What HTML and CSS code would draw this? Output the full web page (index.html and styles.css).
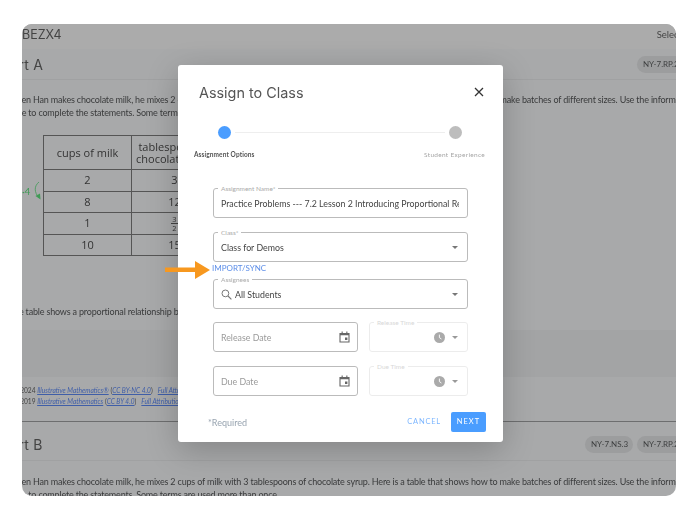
FILE: index.html
```html
<!DOCTYPE html>
<html lang="en">
<head>
<meta charset="utf-8">
<title>Assign to Class</title>
<link rel="stylesheet" href="styles.css">
</head>
<body>
<div class="frame">
  <div class="page">
    <div class="topbar"><span>BEZX4</span><span class="select">Select</span></div>
    <div class="part-head">
      <h2 class="part-title">Part A</h2>
      <div class="chips"><span class="chip">NY-7.RP.2</span></div>
    </div>
    <p class="prompt">When Han makes chocolate milk, he mixes 2 cups of milk with 3 tablespoons of chocolate syrup. Here is a table that shows how to make batches of different sizes. Use the information in the<br>table to complete the statements. Some terms are used more than once.</p>
    <div class="table-wrap">
      <div class="times"><span>·4</span>
        <svg class="times-arrow" width="8" height="19" viewBox="0 0 8 19"><path d="M6 1C1 5 1 11 6 17" fill="none" stroke="#3f9a55" stroke-width=".8"/><path d="M2.500 15l5 3.500-.5-6z" fill="#3f9a55"/></svg>
      </div>
      <table class="recipe">
        <tr class="head"><td class="c1">cups of milk</td><td class="c2">tablespoons of<br>chocolate syrup</td></tr>
        <tr><td>2</td><td>3</td></tr>
        <tr><td>8</td><td>12</td></tr>
        <tr><td>1</td><td><span class="frac"><span class="num">3</span><span>2</span></span></td></tr>
        <tr><td>10</td><td>15</td></tr>
      </table>
    </div>
    <p class="prompt second">The table shows a proportional relationship between the cups of milk and the tablespoons of syrup.</p>
    <div class="band"></div>
    <div class="attrib">
      <p>© 2024 <a>Illustrative Mathematics®</a> (<a>CC BY-NC 4.0</a>) &nbsp; <a>Full Attribution</a></p>
      <p>© 2019 <a>Illustrative Mathematics</a> (<a>CC BY 4.0</a>) &nbsp; <a>Full Attribution</a></p>
    </div>
    <div class="part-head part-b">
      <h2 class="part-title">Part B</h2>
      <div class="chips"><span class="chip">NY-7.NS.3</span><span class="chip">NY-7.RP.2</span></div>
    </div>
    <p class="prompt">When Han makes chocolate milk, he mixes 2 cups of milk with 3 tablespoons of chocolate syrup. Here is a table that shows how to make batches of different sizes. Use the information in the<br>table to complete the statements. Some terms are used more than once.</p>
  </div>

  <div class="modal">
    <div class="modal-head">
      <h1>Assign to Class</h1>
      <svg class="close" width="10" height="10" viewBox="0 0 10 10"><path d="M1 1l8 8M9 1L1 9" stroke="#333" stroke-width="1.3" fill="none"/></svg>
    </div>
    <div class="stepper">
      <div class="step-track"><span class="dot active"></span><span class="track"></span><span class="dot"></span></div>
      <div class="step-labels"><span class="on">Assignment Options</span><span>Student Experience</span></div>
    </div>
    <div class="form">
      <div class="field"><span class="legend">Assignment Name*</span><span class="value clip">Practice Problems --- 7.2 Lesson 2 Introducing Proportional Relationships</span></div>
      <div class="field mt14"><span class="legend">Class*</span><span class="value">Class for Demos</span><span class="caret"></span></div>
      <a class="import">IMPORT/SYNC</a>
      <div class="field mt6"><span class="legend">Assignees</span>
        <svg class="search" width="11" height="11" viewBox="0 0 11 11"><circle cx="4.4" cy="4.4" r="3.4" fill="none" stroke="#777" stroke-width="1"/><path d="M7 7l3.4 3.4" stroke="#777" stroke-width="1.1"/></svg>
        <span class="value">All Students</span><span class="caret"></span></div>
      <div class="date-row mt13">
        <div class="field date"><span class="value muted">Release Date</span>
          <svg class="cal" width="11" height="12" viewBox="0 0 11 12"><path d="M1 2.5h9v8.5H1z" fill="none" stroke="#666" stroke-width="1.1"/><path d="M1 2h9v2.2H1zM2.6.5h1.1v2H2.6zM7.3.5h1.1v2H7.3zM6 6.6h2.4V9H6z" fill="#666"/></svg>
        </div>
        <div class="field time"><span class="legend light">Release Time</span>
          <svg class="clock" width="11" height="11" viewBox="0 0 11 11"><circle cx="5.5" cy="5.5" r="5.5" fill="#aaa"/><path d="M5.4 2.6v3l2 1.4" stroke="#fff" stroke-width=".9" fill="none"/></svg>
          <span class="caret"></span></div>
      </div>
      <div class="date-row mt14">
        <div class="field date"><span class="value muted">Due Date</span>
          <svg class="cal" width="11" height="12" viewBox="0 0 11 12"><path d="M1 2.5h9v8.5H1z" fill="none" stroke="#666" stroke-width="1.1"/><path d="M1 2h9v2.2H1zM2.6.5h1.1v2H2.6zM7.3.5h1.1v2H7.3zM6 6.6h2.4V9H6z" fill="#666"/></svg>
        </div>
        <div class="field time"><span class="legend light">Due Time</span>
          <svg class="clock" width="11" height="11" viewBox="0 0 11 11"><circle cx="5.5" cy="5.5" r="5.5" fill="#aaa"/><path d="M5.4 2.6v3l2 1.4" stroke="#fff" stroke-width=".9" fill="none"/></svg>
          <span class="caret"></span></div>
      </div>
    </div>
    <div class="modal-foot">
      <span class="required">*Required</span>
      <span class="cancel">CANCEL</span>
      <span class="next">NEXT</span>
    </div>
  </div>

  <svg class="pointer" width="45" height="18" viewBox="0 0 45 18"><path d="M0 6.500h30V0l15 9-15 9v-7H0z" fill="#f7981f"/></svg>
</div>
</body>
</html>
```
FILE: styles.css
```css
* { box-sizing: border-box; }
html, body { margin: 0; background: #fff; }
body { width: 698px; height: 508px; padding: 24px 22px 12px; overflow: hidden; font-family: Lato, "Liberation Sans", sans-serif; }
p, h1, h2 { margin: 0; font-weight: 400; }

.frame { position: relative; width: 654px; height: 472px; overflow: hidden; border-radius: 10px; background: #a8a9aa; filter: blur(.4px); }
.page { display: flex; flex-direction: column; color: #3a3b3c; }

.topbar { height: 25px; background: #ababab; display: flex; justify-content: space-between; align-items: center; padding-bottom: 4px; font-size: 12.500px; font-family: Inter, sans-serif; margin-right: -6px; color: #444; }
.topbar .select { font-size: 9.500px; font-family: Lato, sans-serif; }

.part-head { height: 31px; display: flex; justify-content: space-between; align-items: center; border-bottom: 1px solid #a0a1a2; margin: 0 -14px 0 -21px; }
.part-title { font-size: 14px; font-family: Inter, sans-serif; color: #444; letter-spacing: .3px; }
.chips { display: flex; gap: 4px; }
.chip { height: 17px; width: 48px; border-radius: 9px; background: #9c9d9e; font-size: 8px; line-height: 17px; padding-left: 6px; color: #3f4041; white-space: nowrap; }
.part-head .chips .chip:last-child { width: 53px; }

.prompt { margin: 13px 0 0 -14.500px; font-size: 9px; letter-spacing: -.18px; line-height: 13px; white-space: nowrap; color: #3a3b3c; flex: none; }
.prompt.second { margin: 49px 0 0 -13px; }

.table-wrap { position: relative; margin: 16px 0 0 21px; }
.times { position: absolute; left: -21px; top: 46px; display: flex; align-items: center; font-size: 10px; color: #3f9a55; gap: 3px; }
.recipe { border-collapse: collapse; font-family: "Open Sans", sans-serif; font-size: 11px; color: #333; text-align: center; table-layout: fixed; width: 174px; }
.recipe td { border: 1px solid #555; height: 21.500px; padding: 0; line-height: 12px; }
.recipe .head td { height: 34px; }
.recipe .c1 { width: 88px; }
.recipe .c2 { width: 86px; padding-left: 4px; white-space: nowrap; }
.frac { display: inline-flex; flex-direction: column; align-items: center; font-size: 7.500px; line-height: 8px; vertical-align: middle; }
.num { border-bottom: 1px solid #444; padding: 0 1px; }

.band { height: 47px; margin-top: 12px; background: #a3a4a5; }
.attrib { margin: 8px 0 0 -9px; font-size: 6.600px; line-height: 11px; color: #444; white-space: nowrap; height: 36px; }
.attrib a { color: #3f5ea8; font-style: italic; text-decoration: underline; }

.part-b { height: 40px; padding-top: 6px; border-top: 1px solid #6d6e6f; }
.part-b + .prompt { margin-top: 13.500px; }

.modal { position: absolute; left: 156px; top: 41px; width: 325px; height: 377px; background: #fff; border-radius: 3px; box-shadow: 0 8px 32px rgba(0,0,0,.22); display: flex; flex-direction: column; color: #444; }
.modal-head { display: flex; justify-content: space-between; align-items: center; height: 56px; padding: 0 19px 2px 21px; }
.modal-head h1 { font-family: Inter, sans-serif; font-size: 14.400px; color: #555; }

.stepper { padding: 5px 18px 0 16px; }
.step-track { display: flex; align-items: center; padding: 0 23px 0 24px; gap: 4px; }
.dot { width: 13px; height: 13px; border-radius: 50%; background: #bdbdbd; flex: none; }
.dot.active { background: #4a9dff; }
.track { height: 1px; flex: 1; background: #eee; }
.step-labels { display: flex; justify-content: space-between; margin-top: 12px; font-size: 6.500px; line-height: 8px; letter-spacing: .3px; color: #a6a6a6; }
.step-labels .on { color: #555; font-weight: 700; letter-spacing: .1px; }

.form { padding: 29.400px 35px 0; display: flex; flex-direction: column; }
.field { position: relative; height: 30px; border: 1px solid #bbb; border-radius: 3px; display: flex; align-items: center; padding: 0 8px 0 7px; font-size: 8.800px; color: #444; }
.legend { position: absolute; left: 4px; top: -4px; padding: 0 3px; background: #fff; font-size: 6.500px; line-height: 7px; color: #aaa; white-space: nowrap; }
.legend.light { color: #d8d8d8; }
.value { white-space: nowrap; }
.clip { overflow: hidden; width: 100%; }
.muted { color: #9a9a9a; }
.caret { width: 0; height: 0; margin-left: auto; border: 3px solid transparent; border-top: 3.500px solid #777; border-bottom: 0; margin-right: 1px; }
.mt14 { margin-top: 14px; }
.mt13 { margin-top: 13px; }
.mt6 { margin-top: 6px; }
.import { margin: 1px 0 0 -1px; font-size: 8px; line-height: 10px; color: #5b8de8; }
.search { margin-right: 3px; flex: none; }
.date-row { display: flex; gap: 11px; }
.date { width: 145px; justify-content: space-between; padding-right: 7px; }
.time { width: 99px; border-color: #ececec; justify-content: flex-end; padding-right: 9px; }
.time .caret { margin-left: 7px; margin-right: 0; border-top-color: #999; }
.clock, .cal { flex: none; }

.modal-foot { display: flex; align-items: center; margin-top: auto; padding: 0 17px 10px 30px; font-size: 9px; }
.required { color: #98a4b0; margin-right: auto; }
.cancel { color: #7db6ff; font-size: 7.500px; letter-spacing: .8px; margin: 0 10px 1px 0; }
.next { width: 35px; height: 20px; border-radius: 2px; background: #4a9dff; color: #fff; font-size: 7.500px; letter-spacing: 1px; line-height: 20px; text-align: center; }

.pointer { position: absolute; left: 143px; top: 237px; }
```
